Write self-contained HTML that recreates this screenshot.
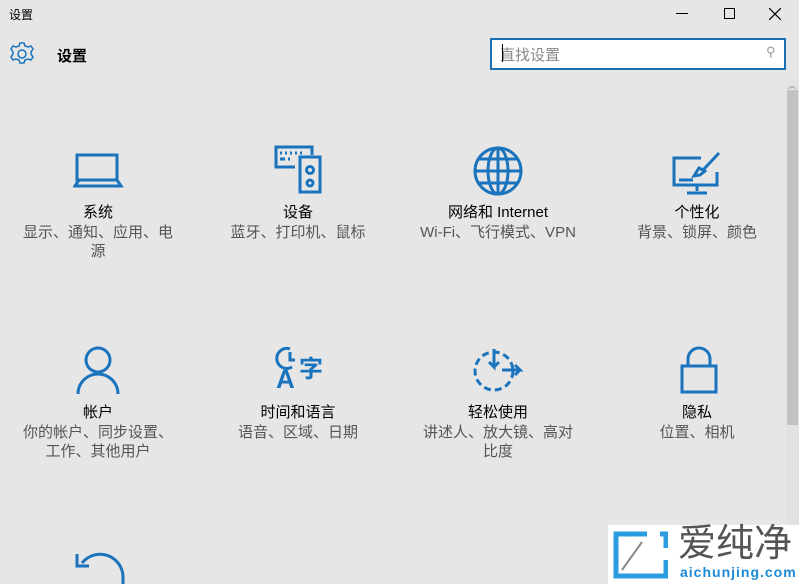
<!DOCTYPE html>
<html><head><meta charset="utf-8"><style>
*{margin:0;padding:0;box-sizing:border-box}
body{width:799px;height:584px;background:#e6e6e6;font-family:"Liberation Sans","Noto Sans CJK SC",sans-serif;position:relative;overflow:hidden;color:#000}
.a{position:absolute}
.t{position:absolute;width:196px;text-align:center;font-size:15px;line-height:19.5px}
.t b{font-weight:normal;display:block;color:#000}
.t span{color:#555;display:block}
svg.i{position:absolute;fill:none;stroke:#1a73bd;stroke-width:3}
</style></head><body>
<div class="a" style="left:9px;top:6px;font-size:12px">设置</div>
<div class="a" style="left:676px;top:13px;width:12px;height:1px;background:#000"></div>
<div class="a" style="left:724px;top:8px;width:11px;height:11px;border:1px solid #000"></div>
<svg class="a" style="left:769px;top:8px" width="12" height="12"><path d="M0 0L12 12M12 0L0 12" stroke="#000" stroke-width="1.2"/></svg>
<svg class="a" style="left:9px;top:41px" width="26" height="26" viewBox="0 0 26 26"><path d="M11 2h4l1 3 3 1 3-1 2 3-2 3v2l2 3-2 3-3-1-3 1-1 3h-4l-1-3-3-1-3 1-2-3 2-3v-2l-2-3 2-3 3 1 3-1z" fill="none" stroke="#1a73bd" stroke-width="1.5"/><circle cx="13" cy="13" r="4" fill="none" stroke="#1a73bd" stroke-width="1.5"/></svg>
<div class="a" style="left:57px;top:45px;font-size:15px;font-weight:bold">设置</div>
<div class="a" style="left:490px;top:38px;width:296px;height:32px;background:#fff;border:2px solid #1a6fb0"></div>
<div class="a" style="left:500px;top:44px;font-size:15px;color:#888">直找设置</div>
<div class="a" style="left:502px;top:44px;width:1px;height:18px;background:#000"></div>
<div class="a" style="left:766px;top:44px;font-size:13px;color:#999">⚲</div>
<div class="a" style="left:786px;top:80px;width:13px;height:504px;background:#e2e2e2"></div>
<div class="a" style="left:787px;top:90px;width:11px;height:335px;background:#c2c2c2"></div>
<div class="a" style="left:788px;top:80px;font-size:8px;color:#666">︿</div>

<svg class="i" style="left:73px;top:153px" width="52" height="36"><rect x="4" y="2" width="40" height="25" stroke-width="3"/><path d="M2 33l4-6h38l4 6z" /></svg>
<svg class="i" style="left:273px;top:145px" width="52" height="50"><path d="M22 22H3V2h36v8M7 8h2m3 0h2m3 0h2m3 0h2m3 0h2M7 14h5m3 0h2"/><rect x="27" y="12" width="20" height="35"/><circle cx="37" cy="25" r="3.5"/><circle cx="37" cy="38" r="3"/></svg>
<svg class="i" style="left:472px;top:145px" width="52" height="52"><circle cx="26" cy="26" r="23"/><ellipse cx="26" cy="26" rx="10" ry="23"/><path d="M3 26h46M7 14h38M7 38h38M26 3v46"/></svg>
<svg class="i" style="left:671px;top:150px" width="52" height="45"><path d="M30 8H3v27h43V22M26 35v6M16 43h20M8 30h14"/><path d="M48 3L32 20l-4-2-5 8 6-1 5-4-2-3" /></svg>

<div class="t" style="left:0px;top:203px"><b>系统</b><span>显示、通知、应用、电<br>源</span></div>
<div class="t" style="left:200px;top:203px"><b>设备</b><span>蓝牙、打印机、鼠标</span></div>
<div class="t" style="left:400px;top:203px"><b>网络和 Internet</b><span>Wi-Fi、飞行模式、VPN</span></div>
<div class="t" style="left:599px;top:203px"><b>个性化</b><span>背景、锁屏、颜色</span></div>

<svg class="i" style="left:75px;top:345px" width="46" height="50"><circle cx="23" cy="15" r="12"/><path d="M3 49a20 20 0 0 1 40 0"/></svg>
<svg class="i" style="left:274px;top:345px" width="52" height="52"><path d="M16 4a10 10 0 1 0 2 18"/><path d="M16 7v8h5" /></svg>
<div class="a" style="left:276px;top:366px;font-size:26px;font-weight:bold;color:#1a73bd;line-height:26px">A</div>
<div class="a" style="left:299px;top:357px;font-size:24px;font-weight:bold;color:#1a73bd;line-height:26px">字</div>
<svg class="i" style="left:472px;top:347px" width="52" height="46"><circle cx="22" cy="24" r="19" stroke-dasharray="7 4"/><path d="M22 2v18l-5-5m5 5l5-5M30 23h18l-5-5m5 5l-5 5"/></svg>
<svg class="i" style="left:679px;top:346px" width="40" height="48"><path d="M9 20V13a11 11 0 0 1 22 0v7"/><rect x="3" y="20" width="34" height="26"/></svg>

<div class="t" style="left:0px;top:403px"><b>帐户</b><span>你的帐户、同步设置、<br>工作、其他用户</span></div>
<div class="t" style="left:200px;top:403px"><b>时间和语言</b><span>语音、区域、日期</span></div>
<div class="t" style="left:400px;top:403px"><b>轻松使用</b><span>讲述人、放大镜、高对<br>比度</span></div>
<div class="t" style="left:599px;top:403px"><b>隐私</b><span>位置、相机</span></div>

<svg class="i" style="left:72px;top:543px" width="54" height="41"><path d="M51 41V33A23 23 0 0 0 10 20"/><path d="M5 11v12h12"/></svg>

<div class="a" style="left:608px;top:525px;width:191px;height:59px;background:#fff"></div>
<svg class="a" style="left:612px;top:530px" width="56" height="50"><path d="M35 4H4v42h50V30M48 4h6v14" fill="none" stroke="#2a9de0" stroke-width="5"/><path d="M10 40L30 12" stroke="#888" stroke-width="2"/></svg>
<div class="a" style="left:678px;top:522px;font-size:38px;color:#555;line-height:44px;letter-spacing:0px">爱纯净</div>
<div class="a" style="left:680px;top:564px;font-size:14px;font-weight:bold;color:#1a8ad4;letter-spacing:1px">aichunjing.com</div>
</body></html>
